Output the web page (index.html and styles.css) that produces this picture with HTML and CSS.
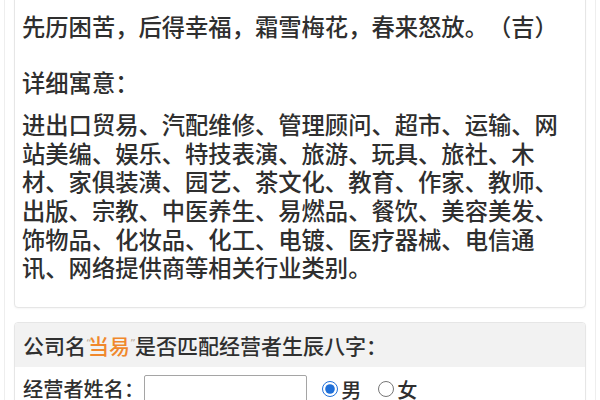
FILE: index.html
```html
<!DOCTYPE html>
<html lang="zh-CN">
<head>
<meta charset="utf-8">
<title>公司名测试</title>
<link rel="stylesheet" href="styles.css">
</head>
<body>
<div class="wrap">
  <div class="card meaning">
    <p class="summary">先历困苦，后得幸福，霜雪梅花，春来怒放。（吉）</p>
    <p class="label">详细寓意：</p>
    <p class="list">进出口贸易、汽配维修、管理顾问、超市、运输、网站美编、娱乐、特技表演、旅游、玩具、旅社、木材、家俱装潢、园艺、茶文化、教育、作家、教师、出版、宗教、中医养生、易燃品、餐饮、美容美发、饰物品、化妆品、化工、电镀、医疗器械、电信通讯、网络提供商等相关行业类别。</p>
  </div>
  <div class="card match">
    <div class="match-head">公司名<span class="q">“</span><span class="hl">当易</span><span class="q q2">”</span>是否匹配经营者生辰八字：</div>
    <div class="match-row">
      <span class="field-label">经营者姓名：</span>
      <input class="name-input" type="text">
      <label class="radio"><input type="radio" name="sex" checked>男</label>
      <label class="radio"><input type="radio" name="sex">女</label>
    </div>
  </div>
</div>
</body>
</html>
```
FILE: styles.css
```css
html, body {
  margin: 0;
  padding: 0;
  background: #fff;
}
body {
  font-family: "Noto Sans CJK SC", "Noto Sans", sans-serif;
  font-weight: 500;
  color: #2f2f2f;
  text-spacing-trim: space-all;
  overflow: hidden;
}
.wrap {
  margin: 0 4px;
  border-left: 1px solid #eeeeee;
  border-right: 1px solid #eeeeee;
  padding: 0 9px;
  min-height: 400px;
}
.card {
  border: 1px solid #e6e6e6;
  border-radius: 4px;
  background: #fff;
  box-shadow: 0 1px 2px rgba(0,0,0,0.04);
}
.meaning {
  margin-top: -20px;
  padding: 31px 7px 25px 7px;
  font-size: 23.3px;
  line-height: 28.6px;
}
.meaning p {
  margin: 0;
}
.meaning .label {
  margin-top: 27px;
}
.meaning .list {
  margin-top: 14px;
}
.match {
  margin-top: 14px;
  font-size: 20.2px;
  overflow: hidden;
}
.match-head {
  background: #f2f2f2;
  padding: 10px 8px;
  line-height: 24px;
  font-size: 21px;
}
.q {
  display: inline-block;
  width: 2px;
  overflow: visible;
  font-family: "DejaVu Sans", sans-serif;
  color: #b8a898;
  font-size: 11px;
  vertical-align: top;
  line-height: 22px;
}
.q2 {
  width: 5px;
}
.hl {
  color: #f0882c;
}
.match-row {
  display: flex;
  align-items: center;
  padding: 8px 8px 12px 8px;
}
.field-label {
  line-height: 28px;
}
.name-input {
  margin: 0;
  width: 163px;
  height: 28px;
  box-sizing: border-box;
  border: 1px solid #a5a5a5;
  border-radius: 2px;
}
.radio {
  display: flex;
  align-items: center;
  margin-left: 15px;
}
.radio + .radio {
  margin-left: 17px;
}
.radio input {
  margin: 0 3px 0 0;
  width: 16px;
  height: 16px;
  accent-color: #1f6fd8;
}
```
